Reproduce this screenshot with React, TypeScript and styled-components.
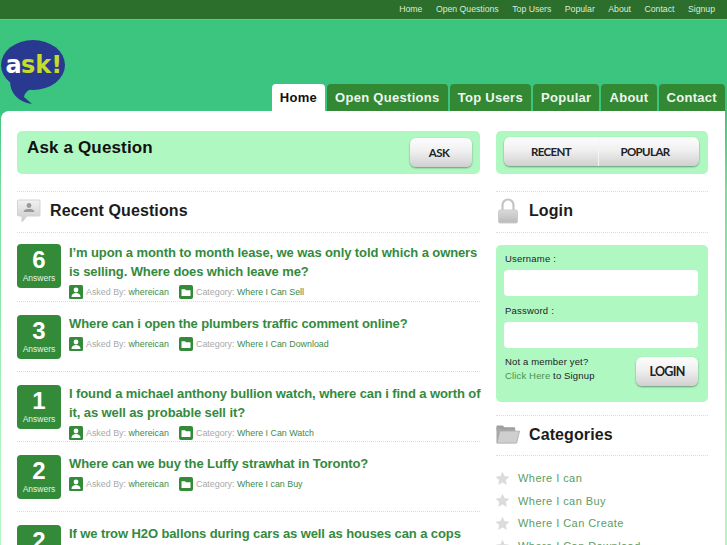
import React from "react";
import styled, { createGlobalStyle } from "styled-components";

const Global = createGlobalStyle`
  html, body { margin: 0; padding: 0; height: 545px; overflow: hidden; }
  body {
    background: linear-gradient(180deg, #3ac47c 0, #3cc580 110px, #78dc9f 190px, #b0f8c0 470px);
    font-family: "Liberation Sans", Arial, sans-serif;
  }
  * { box-sizing: border-box; }
  a { text-decoration: none; color: inherit; }
`;

const Page = styled.div`
  width: 727px;
  height: 545px;
  overflow: hidden;
`;
const TopBar = styled.div`
  height: 19px;
  background: #2c6e2b;
  display: flex;
  justify-content: flex-end;
  align-items: center;
  gap: 13.5px;
  padding: 1px 12px 2px 0;
  box-shadow: 0 1px 0 #5fc98a;
`;
const TopLink = styled.a`
  color: #dcebdc;
  font-size: 8.7px;
`;
const Header = styled.div`
  height: 92px;
  display: flex;
  justify-content: space-between;
  align-items: flex-end;
  padding-right: 2px;
`;
const LogoBox = styled.svg`
  width: 68px;
  height: 68px;
  margin-bottom: 5px;
  display: block;
`;
const Tabs = styled.div`
  display: flex;
  gap: 2px;
`;
const Tab = styled.a<{ $active?: boolean }>`
  height: 27px;
  padding: 0 8px;
  display: flex;
  align-items: center;
  border-radius: 4px 4px 0 0;
  font-size: 13px;
  font-weight: 700;
  letter-spacing: 0.3px;
  color: ${(p) => (p.$active ? "#111" : "#eef6ee")};
  background: ${(p) => (p.$active ? "#fff" : "#338833")};
`;
const Panel = styled.div`
  margin: 0 2px 0 1px;
  height: 440px;
  background: #fff;
  border-radius: 8px 0 0 0;
  padding: 20px 17px 0 16px;
  display: grid;
  grid-template-columns: 463px 212px;
  column-gap: 16px;
  overflow: hidden;
  align-content: start;
`;
const Column = styled.div`
  display: flex;
  flex-direction: column;
  min-width: 0;
`;
const AskBox = styled.div`
  height: 43px;
  background: #b0f8c2;
  border-radius: 5px;
  display: flex;
  justify-content: space-between;
  padding: 6px 8px 0 10px;
`;
const AskTitle = styled.div`
  font-size: 17px;
  line-height: 21px;
  font-weight: 700;
  color: #111;
  letter-spacing: 0.15px;
`;
const GlossButton = styled.button`
  height: 29px;
  border: 0;
  padding: 0;
  border-radius: 6px;
  font-family: "Lato", "Liberation Sans", sans-serif;
  font-weight: 700;
  font-size: 11.5px;
  letter-spacing: -0.6px;
  color: #222;
  background: linear-gradient(180deg, #fdfdfd 0%, #f0f0f0 45%, #d0d0d0 100%);
  box-shadow: 0 1px 2px rgba(0, 0, 0, 0.4);
`;
const AskButton = styled(GlossButton)`
  width: 62px;
  margin-top: 1px;
  padding-right: 4px;
`;
const LoginButton = styled(GlossButton)`
  width: 62px;
  height: 29px;
  font-size: 12.5px;
  letter-spacing: -0.7px;
`;
const SortBox = styled(AskBox)`
  padding: 6px 9px 0 8px;
`;
const SortGroup = styled.div`
  flex: 1;
  height: 29px;
  border-radius: 6px;
  display: flex;
  background: linear-gradient(180deg, #fdfdfd 0%, #f0f0f0 45%, #d0d0d0 100%);
  box-shadow: 0 1px 2px rgba(0, 0, 0, 0.4);
`;
const SortItem = styled.div<{ $w: number }>`
  width: ${(p) => p.$w}px;
  display: flex;
  align-items: center;
  justify-content: center;
  font-family: "Lato", "Liberation Sans", sans-serif;
  font-weight: 700;
  font-size: 11.5px;
  letter-spacing: -0.6px;
  color: #222;
  & + & {
    border-left: 1px solid #f4f4f4;
    padding-right: 8px;
  }
`;
const SectionHead = styled.div`
  margin-top: 17px;
  height: 42px;
  padding-bottom: 2px;
  border-top: 1px dotted #dcdcdc;
  border-bottom: 1px dotted #dcdcdc;
  display: flex;
  align-items: center;
  gap: 9px;
`;
const SectionTitle = styled.div`
  font-size: 16px;
  font-weight: 700;
  color: #1c1c1c;
  letter-spacing: 0.1px;
`;
const Questions = styled.div`
  margin-top: 11px;
  display: flex;
  flex-direction: column;
`;
const QRow = styled.div<{ $h: number }>`
  height: ${(p) => p.$h}px;
  margin-bottom: 13px;
  display: flex;
  gap: 8px;
  flex-shrink: 0;
  border-bottom: 1px dotted #dcdcdc;
  &:last-child { border-bottom: 0; }
`;
const Badge = styled.div`
  width: 44px;
  height: 44px;
  flex: none;
  background: #338a38;
  border-radius: 4px;
  color: #fff;
  display: flex;
  flex-direction: column;
  align-items: center;
  padding-top: 3px;
`;
const BadgeNum = styled.div`
  font-size: 24px;
  line-height: 25px;
  font-weight: 700;
`;
const BadgeLabel = styled.div`
  font-size: 8.5px;
  line-height: 12px;
  color: #e6f2e6;
`;
const QBody = styled.div`
  flex: 1;
  min-width: 0;
  margin-top: -1px;
`;
const QTitle = styled.a`
  display: block;
  margin-right: -3px;
  font-size: 13px;
  line-height: 19px;
  font-weight: 700;
  color: #338a3d;
  letter-spacing: -0.1px;
`;
const Meta = styled.div`
  margin-top: 4px;
  display: flex;
  align-items: center;
  font-size: 8.9px;
  color: #a9a9a9;
  height: 14px;
`;
const MetaItem = styled.div`
  display: flex;
  align-items: center;
  gap: 3px;
  &:first-child { width: 110px; }
`;
const MetaLink = styled.a`
  color: #408a4a;
`;
const IconBox = styled.svg`
  width: 14px;
  height: 14px;
  flex: none;
  display: block;
`;
const LoginBox = styled.div`
  margin-top: 12px;
  height: 157px;
  background: #b0f8c2;
  border-radius: 5px;
  padding: 8px 10px 0 8px;
`;
const FieldLabel = styled.div`
  font-size: 9.5px;
  line-height: 12px;
  letter-spacing: 0.2px;
  color: #222;
  margin: 0 0 5px 1px;
`;
const Input = styled.div`
  height: 26px;
  background: #fff;
  border-radius: 4px;
  margin-bottom: 9px;
`;
const LoginFoot = styled.div`
  margin-top: 9px;
  display: flex;
  justify-content: space-between;
  align-items: flex-start;
`;
const FootText = styled.div`
  font-size: 9.5px;
  line-height: 14px;
  letter-spacing: 0.15px;
  color: #222;
  padding-left: 1px;
  margin-top: -2px;
`;
const FootLink = styled.a`
  color: #4a8f50;
`;
const SideHead = styled(SectionHead)`
  margin-top: 13px;
  height: 41px;
`;
const CatList = styled.div`
  margin-top: 11px;
  display: flex;
  flex-direction: column;
`;
const CatRow = styled.a`
  height: 22.6px;
  display: flex;
  align-items: center;
  gap: 9px;
  font-size: 11px;
  letter-spacing: 0.45px;
  color: #5c9d62;
`;

const Logo = () => (
  <LogoBox viewBox="0 0 68 68" aria-hidden="true">
    <ellipse cx="33" cy="27" rx="32" ry="25" fill="#2a3990" />
    <path d="M10 43 C10 55 18 64 32 66 L24 59 C25 54 28 52 36 48 Z" fill="#2a3990" />
    <text x="5.5" y="35" fontFamily="'DejaVu Sans', sans-serif" fontWeight="700" fontSize="24" fill="#ffffff">a</text>
    <text x="21" y="35" fontFamily="'DejaVu Sans', sans-serif" fontWeight="700" fontSize="24" fill="#c5dc2c">sk!</text>
  </LogoBox>
);

const UserIcon = () => (
  <IconBox viewBox="0 0 14 14" aria-hidden="true">
    <rect width="14" height="14" rx="1.5" fill="#338a38" />
    <circle cx="7" cy="5" r="2.4" fill="#fff" />
    <path d="M2.5 12 C2.5 9 4.5 8 7 8 C9.5 8 11.5 9 11.5 12 Z" fill="#fff" />
  </IconBox>
);
const FolderIcon = () => (
  <IconBox viewBox="0 0 14 14" aria-hidden="true">
    <rect width="14" height="14" rx="2" fill="#338a38" />
    <path d="M2.5 4.2 H6 L7 5.2 H11.5 V11 H2.5 Z" fill="#fff" />
  </IconBox>
);
const SpeechIcon = () => (
  <svg width="24" height="24" viewBox="0 0 24 24" aria-hidden="true">
    <defs>
      <linearGradient id="sp" x1="0" y1="0" x2="0" y2="1">
        <stop offset="0" stopColor="#f2f2f2" />
        <stop offset="1" stopColor="#c9c9c9" />
      </linearGradient>
    </defs>
    <path d="M1.5 1 H22 a1 1 0 0 1 1 1 V16 a1 1 0 0 1 -1 1 H10 L5 23 V17 H1.5 a1 1 0 0 1 -1 -1 V2 a1 1 0 0 1 1 -1 Z" fill="url(#sp)" stroke="#d2d2d2" />
    <circle cx="12" cy="6.5" r="2.4" fill="#9a9a9a" />
    <path d="M6.5 13 C7 10.5 9 10 12 10 C15 10 17 10.5 17.5 13 Z" fill="#9a9a9a" />
  </svg>
);
const LockIcon = () => (
  <svg width="24" height="26" viewBox="-2 0 24 26" aria-hidden="true">
    <defs>
      <linearGradient id="lk" x1="0" y1="0" x2="0" y2="1">
        <stop offset="0" stopColor="#dadada" />
        <stop offset="1" stopColor="#b9b9b9" />
      </linearGradient>
    </defs>
    <path d="M4.5 12 V7 a5.5 5.5 0 0 1 11 0 V12" fill="none" stroke="#c4c4c4" strokeWidth="2.2" />
    <rect x="0.5" y="12" width="19" height="13" rx="1.5" fill="url(#lk)" stroke="#cdcdcd" />
  </svg>
);
const FolderBigIcon = () => (
  <svg width="24" height="21" viewBox="0 0 25 21" aria-hidden="true">
    <path d="M0.5 2 a1 1 0 0 1 1 -1 H7 L9 3 H19 a1 1 0 0 1 1 1 V6 H0.5 Z" fill="#9f9f9f" />
    <path d="M0.5 3 V19 H3 L4 7 H20 V5 H8 Z" fill="#a8a8a8" />
    <path d="M4 7 H24.5 L21.5 19.5 H1 Z" fill="#cfcfcf" stroke="#a8a8a8" strokeWidth="0.8" />
  </svg>
);
const StarIcon = () => (
  <svg width="13" height="13" viewBox="0 0 13 13" aria-hidden="true">
    <path d="M6.5 0.5 L8.3 4.5 L12.7 5 L9.4 7.9 L10.3 12.3 L6.5 10.1 L2.7 12.3 L3.6 7.9 L0.3 5 L4.7 4.5 Z" fill="#dcdcdc" stroke="#cfcfcf" strokeWidth="0.5" />
  </svg>
);

const topLinks = ["Home", "Open Questions", "Top Users", "Popular", "About", "Contact", "Signup"];
const tabs = ["Home", "Open Questions", "Top Users", "Popular", "About", "Contact"];
const questions = [
  { n: 6, title: "I’m upon a month to month lease, we was only told which a owners is selling. Where does which leave me?", cat: "Where I Can Sell", h: 58 },
  { n: 3, title: "Where can i open the plumbers traffic comment online?", cat: "Where I Can Download", h: 57 },
  { n: 1, title: "I found a michael anthony bullion watch, where can i find a worth of it, as well as probable sell it?", cat: "Where I Can Watch", h: 57 },
  { n: 2, title: "Where can we buy the Luffy strawhat in Toronto?", cat: "Where I can Buy", h: 57 },
  { n: 2, title: "If we trow H2O ballons during cars as well as houses can a cops", cat: "", h: 60 },
];
const cats = ["Where I can", "Where I can Buy", "Where I Can Create", "Where I Can Download"];

export default function App() {
  return (
    <Page>
      <Global />
      <TopBar>
        {topLinks.map((l) => (
          <TopLink key={l} href="#">{l}</TopLink>
        ))}
      </TopBar>
      <Header>
        <Logo />
        <Tabs>
          {tabs.map((t, i) => (
            <Tab key={t} href="#" $active={i === 0}>{t}</Tab>
          ))}
        </Tabs>
      </Header>
      <Panel>
        <Column>
          <AskBox>
            <AskTitle>Ask a Question</AskTitle>
            <AskButton>ASK</AskButton>
          </AskBox>
          <SectionHead>
            <SpeechIcon />
            <SectionTitle>Recent Questions</SectionTitle>
          </SectionHead>
          <Questions>
            {questions.map((q, i) => (
              <QRow key={i} $h={q.h}>
                <Badge>
                  <BadgeNum>{q.n}</BadgeNum>
                  <BadgeLabel>Answers</BadgeLabel>
                </Badge>
                <QBody>
                  <QTitle href="#">{q.title}</QTitle>
                  {q.cat && (
                    <Meta>
                      <MetaItem>
                        <UserIcon />
                        <span>Asked By: <MetaLink href="#">whereican</MetaLink></span>
                      </MetaItem>
                      <MetaItem>
                        <FolderIcon />
                        <span>Category: <MetaLink href="#">{q.cat}</MetaLink></span>
                      </MetaItem>
                    </Meta>
                  )}
                </QBody>
              </QRow>
            ))}
          </Questions>
        </Column>
        <Column>
          <SortBox>
            <SortGroup>
              <SortItem $w={94}>RECENT</SortItem>
              <SortItem $w={101}>POPULAR</SortItem>
            </SortGroup>
          </SortBox>
          <SectionHead>
            <LockIcon />
            <SectionTitle>Login</SectionTitle>
          </SectionHead>
          <LoginBox>
            <FieldLabel>Username :</FieldLabel>
            <Input />
            <FieldLabel>Password :</FieldLabel>
            <Input />
            <LoginFoot>
              <FootText>
                Not a member yet?<br />
                <FootLink href="#">Click Here</FootLink> to Signup
              </FootText>
              <LoginButton>LOGIN</LoginButton>
            </LoginFoot>
          </LoginBox>
          <SideHead>
            <FolderBigIcon />
            <SectionTitle>Categories</SectionTitle>
          </SideHead>
          <CatList>
            {cats.map((c) => (
              <CatRow key={c} href="#">
                <StarIcon />
                {c}
              </CatRow>
            ))}
          </CatList>
        </Column>
      </Panel>
    </Page>
  );
}
